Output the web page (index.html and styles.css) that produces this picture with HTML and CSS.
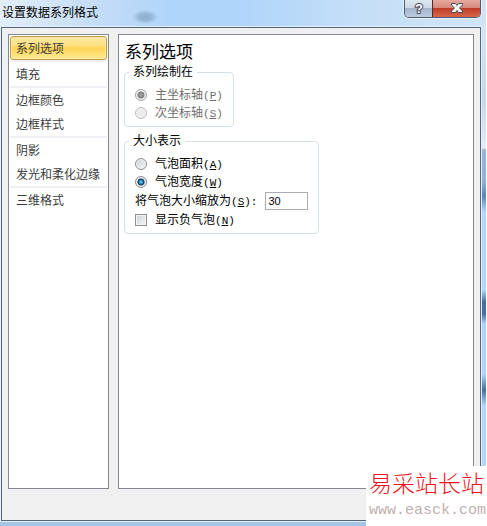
FILE: index.html
```html
<!DOCTYPE html>
<html lang="zh-CN">
<head>
    <meta charset="UTF-8">
    <meta name="viewport" content="width=device-width, initial-scale=1.0">
    <title>设置数据系列格式</title>
    <link rel="stylesheet" href="styles.css">
</head>
<body>
    <div class="dialog">
        <header class="titlebar">
            <h1 class="title">设置数据系列格式</h1>
            <div class="window-buttons">
                <button type="button" class="help" aria-label="帮助">
                    <svg width="18" height="17" viewBox="0 0 18 17">
                        <text class="help-mark" x="9" y="13" text-anchor="middle">?</text>
                    </svg>
                </button>
                <button type="button" class="close" aria-label="关闭">
                    <svg width="14" height="13" viewBox="0 0 14 13">
                        <path d="M1.500 1.500H5.500L7 3.500L8.500 1.500H12.500V3L9.500 6L12.500 9V10.500H8.500L7 8.500L5.500 10.500H1.500V9L4.500 6L1.500 3Z" fill="#f4f4f4" stroke="#4b4c5c" stroke-width="1" stroke-linejoin="round"/>
                    </svg>
                </button>
            </div>
        </header>

        <div class="client">
            <!-- Catégories -->
            <nav class="categories">
                <div class="groupe"><a href="#" class="actif">系列选项</a></div>
                <div class="groupe"><a href="#">填充</a></div>
                <div class="groupe">
                    <a href="#">边框颜色</a>
                    <a href="#">边框样式</a>
                </div>
                <div class="groupe">
                    <a href="#">阴影</a>
                    <a href="#">发光和柔化边缘</a>
                </div>
                <div class="groupe"><a href="#">三维格式</a></div>
            </nav>

            <!-- Options -->
            <main class="options">
                <h2>系列选项</h2>

                <fieldset disabled>
                    <legend>系列绘制在</legend>
                    <div class="ligne">
                        <input type="radio" name="axe" id="axe-p" checked>
                        <label for="axe-p">主坐标轴<span class="touche">(<u>P</u>)</span></label>
                    </div>
                    <div class="ligne">
                        <input type="radio" name="axe" id="axe-s">
                        <label for="axe-s">次坐标轴<span class="touche">(<u>S</u>)</span></label>
                    </div>
                </fieldset>

                <fieldset>
                    <legend>大小表示</legend>
                    <div class="ligne">
                        <input type="radio" name="taille" id="taille-a">
                        <label for="taille-a">气泡面积<span class="touche">(<u>A</u>)</span></label>
                    </div>
                    <div class="ligne">
                        <input type="radio" name="taille" id="taille-w" checked>
                        <label for="taille-w">气泡宽度<span class="touche">(<u>W</u>)</span></label>
                    </div>
                    <div class="ligne echelle">
                        <label for="echelle">将气泡大小缩放为<span class="touche">(<u>S</u>):</span></label>
                        <input type="text" id="echelle" value="30">
                    </div>
                    <div class="ligne">
                        <input type="checkbox" id="negatif">
                        <label for="negatif">显示负气泡<span class="touche">(<u>N</u>)</span></label>
                    </div>
                </fieldset>
            </main>
        </div>
    </div>

    <div class="filigrane">
        <p class="site-nom">易采站长站</p>
        <p class="site-url">www.easck.com</p>
    </div>
</body>
</html>
```

FILE: styles.css
```css
/* Styles généraux */
* {
    box-sizing: border-box;
}
body {
    margin: 0;
    font-family: "Liberation Sans", "Noto Sans CJK SC", sans-serif;
    font-size: 12px;
    color: #000;
    background-color: #fff;
}
h1, h2, p {
    margin: 0;
    font-weight: normal;
}

/* Cadre de la fenêtre */
.dialog {
    display: flex;
    flex-direction: column;
    min-height: 100vh;
    margin-right: 1px;
    padding: 0 5px 5px 1px;
    background:
        radial-gradient(ellipse 13px 7px at 145px 17px, rgba(80, 110, 145, 0.4) 0, rgba(80, 110, 145, 0.3) 50%, rgba(80, 110, 145, 0) 100%) top / 100% 27px no-repeat,
        linear-gradient(90deg, #e3eefa 0, #c9dff6 80px, rgba(176, 213, 250, 0) 170px) top / 100% 27px no-repeat,
        linear-gradient(90deg, rgba(176, 213, 250, 0) 240px, #c5dff8 360px, #d0e4f8 100%) top / 100% 27px no-repeat,
        linear-gradient(#b0d5fa, #b0d5fa) top / 100% 27px no-repeat,
        linear-gradient(#a3c5e8, #a3c5e8) bottom / 100% 5px no-repeat,
        linear-gradient(#d3e6f8 27px, #c4d8ec 100px, #e2edf7 148px, #97b7d8 150px, #8fb1d4 182px, #5c86b5 196px, #b3d7fb 212px, #b3d7fb 290px, #43709f 302px, #4870a6 314px, #b0d4f9 324px, #b0d4f9 374px, #43709f 390px, #b3d7fb 406px);
}
.titlebar {
    display: flex;
    justify-content: space-between;
    align-items: flex-start;
    height: 27px;
}
.title {
    padding-left: 1px;
    font-size: 12px;
    line-height: 26px;
}
.window-buttons {
    display: flex;
    height: 18px;
    border: 1px solid #4e5b70;
    border-top: none;
    border-radius: 0 0 5px 5px;
    box-shadow: 0 0 0 1px #e5f1fc;
    overflow: hidden;
}
.window-buttons button {
    display: flex;
    justify-content: center;
    align-items: center;
    padding: 0;
    border: none;
}
.help {
    width: 27px;
    background: linear-gradient(#dce6f0 0, #ccd8e6 8px, #a3b3c8 8px, #bccbdf 100%);
}
.help-mark {
    font-family: "Liberation Sans", sans-serif;
    font-size: 13px;
    line-height: 13px;
    font-weight: bold;
    fill: #fff;
    stroke: #4b4c5c;
    stroke-width: 2px;
    paint-order: stroke;
}
.window-buttons .close {
    width: 48px;
    border-left: 1px solid #5d2528;
    background: linear-gradient(#e6a99f 0, #d5877b 8px, #bd3a26 8px, #d7674a 100%);
}

/* Zone intérieure */
.client {
    flex: 1;
    display: flex;
    gap: 9px;
    padding: 6px 6px 31px;
    border: 1px solid #52657a;
    box-shadow: 0 0 0 1px #e5f1fc;
    background-color: #f0f0f0;
}
.categories,
.options {
    border: 1px solid #828790;
    background-color: #fff;
}

/* Catégories */
.categories {
    flex: none;
    width: 101px;
    padding: 1px;
}
.groupe + .groupe {
    border-top: 2px solid #f0f0f4;
}
.groupe a {
    display: block;
    padding: 2px 0 0 6px;
    line-height: 22px;
    color: #3c3c3c;
    text-decoration: none;
    white-space: nowrap;
}
.groupe .actif {
    padding: 2px 0 0 5px;
    border: 1px solid #c29b3d;
    border-radius: 3px;
    line-height: 20px;
    background: linear-gradient(#fbe8a6 0, #fde07c 9px, #ffd452 11px, #ffe995 100%);
    box-shadow: inset 0 0 1px 1px #fbeab2;
}

/* Options */
.options {
    flex: 1;
    padding: 6px 5px;
}
.options h2 {
    margin-bottom: 1px;
    padding-left: 1px;
    font-size: 17px;
    line-height: 24px;
}
fieldset {
    width: fit-content;
    margin: 0 0 8px;
    padding: 8px 10px 4px;
    border: 1px solid #d5dfe5;
    border-radius: 4px;
}
legend {
    margin-left: -6px;
    padding: 0 4px;
    line-height: 12px;
}
.ligne {
    display: flex;
    align-items: center;
    gap: 8px;
    height: 18px;
    line-height: 18px;
}
.touche {
    font-family: "Liberation Mono", monospace;
    font-size: 11px;
}
fieldset:disabled {
    color: #6d6d6d;
}
fieldset:disabled legend {
    color: #000;
}
input {
    margin: 0;
}
input[type="radio"],
input[type="checkbox"] {
    appearance: none;
    width: 12px;
    height: 12px;
    border: 1px solid #8e8f8f;
    background: linear-gradient(135deg, #cbcfd5, #f6f6f6);
    box-shadow: inset 0 0 0 1px #f4f4f4;
}
input[type="radio"] {
    border-radius: 50%;
}
input[type="radio"]:checked {
    background: radial-gradient(circle at 5px 5px, #8fd8f5 0, #1b7fb5 2px, #0b3a5c 3px, #d8dce0 4px);
}
input[type="radio"]:disabled {
    border-color: #bcbcbc;
    background: #ececec;
}
input[type="radio"]:disabled:checked {
    border-color: #a4a4a4;
    background: radial-gradient(circle at 5px 5px, #a8a8a8 0, #808080 3px, #e6e6e6 4px);
}
.echelle {
    height: 20px;
}
input[type="text"] {
    width: 43px;
    height: 18px;
    padding: 0 2px;
    border: 1px solid #abadb3;
    font-family: "Liberation Sans", sans-serif;
    font-size: 11px;
}

/* Filigrane du site */
.filigrane {
    position: absolute;
    right: 0;
    bottom: 0;
    padding: 2px 1px 0 3px;
    height: 60px;
    background-color: #fff;
}
.site-nom {
    font-family: "Noto Sans CJK SC", sans-serif;
    font-size: 23px;
    font-weight: 300;
    line-height: 28px;
    color: #ee1122;
}
.site-url {
    font-family: "Liberation Mono", monospace;
    font-size: 15px;
    line-height: 30px;
    color: #bfb0b1;
}
```
